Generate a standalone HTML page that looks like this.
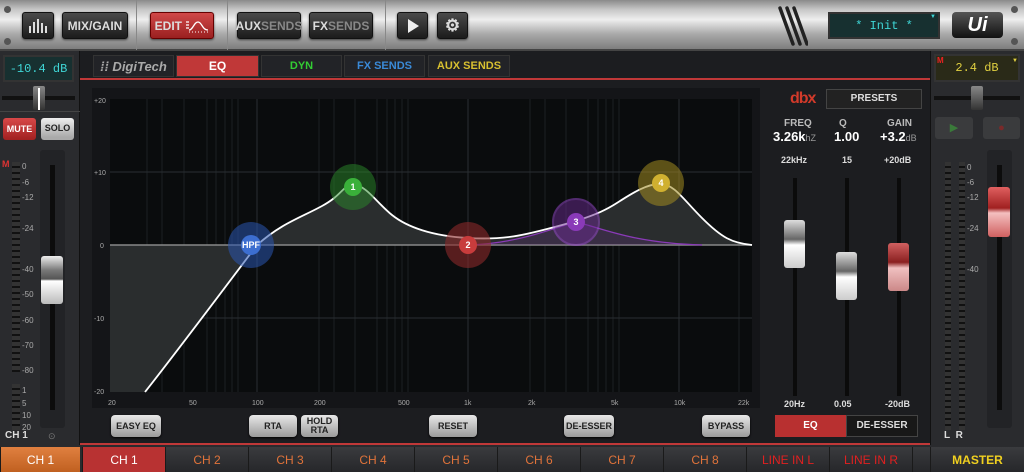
<!DOCTYPE html>
<html><head><meta charset="utf-8">
<style>
*{margin:0;padding:0;box-sizing:border-box}
body{width:1024px;height:472px;overflow:hidden;background:#1c1d20;font-family:"Liberation Sans",sans-serif;position:relative}
.a{position:absolute}
.top{left:0;top:0;width:1024px;height:51px;background:linear-gradient(#8a8a8a 0%,#c8c8c8 20%,#eeeeee 40%,#a8a8a8 70%,#7e7e7e 100%);border-bottom:2px solid #444}
.tb{position:absolute;top:12px;height:27px;background:linear-gradient(#4a4a4a,#1c1c1c);border:1px solid #111;border-radius:3px;color:#ddd;font-weight:bold;font-size:12px;display:flex;align-items:center;justify-content:center;box-shadow:0 1px 2px rgba(0,0,0,.6)}
.sep{position:absolute;top:0;width:1px;height:50px;background:#888}
.lcd{background:#173030;border:2px solid #333;color:#3fd6d6;font-family:"Liberation Mono",monospace;font-size:12px;display:flex;align-items:center;justify-content:center}
.tab{position:absolute;top:55px;height:22px;background:#222327;color:#ccc;font-weight:bold;font-size:11px;display:flex;align-items:center;justify-content:center;border:1px solid #333}
.btn{position:absolute;top:415px;height:22px;background:linear-gradient(#e8e8e8,#9a9a9a);border-radius:4px;color:#222;font-size:9px;font-weight:bold;display:flex;align-items:center;justify-content:center;text-align:center;line-height:9px;box-shadow:0 1px 2px #000}
.bt{position:absolute;top:447px;height:25px;width:83px;background:linear-gradient(#3a3b3e,#26272a);border-left:1px solid #1a1a1a;color:#e0733a;font-size:12px;display:flex;align-items:center;justify-content:center;font-family:"Liberation Sans Narrow","Liberation Sans",sans-serif}
.sm{font-size:8px;color:#aaa}
.cap{position:absolute;border-radius:3px}
</style></head><body>
<div class="a top"></div>
<div class="a" style="left:4px;top:6px;width:7px;height:7px;border-radius:50%;background:#555"></div>
<div class="a" style="left:4px;top:38px;width:7px;height:7px;border-radius:50%;background:#555"></div>
<div class="a" style="left:1011px;top:6px;width:7px;height:7px;border-radius:50%;background:#555"></div>
<div class="a" style="left:1011px;top:38px;width:7px;height:7px;border-radius:50%;background:#555"></div>
<div class="tb" style="left:22px;width:32px"><svg width="18" height="14"><g fill="#ddd"><rect x="0" y="7" width="2" height="7"/><rect x="4" y="3" width="2" height="11"/><rect x="8" y="0" width="2" height="14"/><rect x="12" y="4" width="2" height="10"/><rect x="16" y="7" width="2" height="7"/></g></svg></div>
<div class="tb" style="left:62px;width:66px">MIX/GAIN</div>
<div class="sep" style="left:136px"></div>
<div class="tb" style="left:150px;width:64px;background:linear-gradient(#d04848,#9a2020);border:1px solid #600">EDIT&nbsp;<svg width="24" height="14"><path d="M1 6h3M1 3h3M1 9h3M4 11C8 11 9 3 13 3S17 11 23 11" stroke="#fff" fill="none" stroke-width="1.3"/><path d="M4 13h19" stroke="#fff" stroke-dasharray="1 2"/></svg></div>
<div class="sep" style="left:227px"></div>
<div class="tb" style="left:237px;width:64px">AUX<span style="color:#888">SENDS</span></div>
<div class="tb" style="left:309px;width:64px">FX<span style="color:#888">SENDS</span></div>
<div class="sep" style="left:385px"></div>
<div class="tb" style="left:397px;width:31px"><svg width="12" height="14"><path d="M1 0L12 7L1 14Z" fill="#eee"/></svg></div>
<div class="tb" style="left:437px;width:31px;font-size:17px">⚙</div>
<svg class="a" style="left:778px;top:6px" width="30" height="40"><path d="M2 2L15 38M9 2L22 38M16 2L29 38" stroke="#222" stroke-width="3.5" stroke-linecap="round"/></svg>
<div class="a lcd" style="left:828px;top:12px;width:112px;height:27px">* Init *</div>
<div class="a" style="left:930px;top:14px;color:#3fd6d6;font-size:6px">▼</div>
<div class="a" style="left:952px;top:12px;width:51px;height:26px;background:linear-gradient(#555,#111);border-radius:4px;color:#fff;font-weight:bold;font-style:italic;font-size:20px;text-align:center;line-height:26px">Ui</div>

<!-- left strip -->
<div class="a" style="left:0;top:51px;width:80px;height:396px;background:#2a2b2e;border-right:1px solid #111"></div>
<div class="a lcd" style="left:3px;top:55px;width:71px;height:27px">-10.4 dB</div>
<div class="a" style="left:2px;top:96px;width:73px;height:4px;background:#111"></div>
<div class="a" style="left:33px;top:86px;width:12px;height:24px;background:linear-gradient(#888,#333);border-radius:2px"></div>
<div class="a" style="left:38px;top:88px;width:2px;height:22px;background:#fff"></div>
<div class="a" style="left:0;top:111px;width:80px;height:1px;background:#444"></div>
<div class="a" style="left:3px;top:118px;width:33px;height:22px;background:linear-gradient(#d84848,#a02020);border-radius:3px;color:#fff;font-size:9px;font-weight:bold;text-align:center;line-height:22px">MUTE</div>
<div class="a" style="left:41px;top:118px;width:33px;height:22px;background:linear-gradient(#eee,#aaa);border-radius:3px;color:#222;font-size:9px;font-weight:bold;text-align:center;line-height:20px;border-bottom:3px solid #aaa">SOLO</div>
<div class="a" style="left:2px;top:159px;color:#d33;font-size:9px;font-weight:bold">M</div>
<div class="a" style="left:12px;top:162px;width:8px;height:210px;background:repeating-linear-gradient(#333 0 4px,#111 4px 6px)"></div>
<div class="a" style="left:12px;top:384px;width:8px;height:46px;background:repeating-linear-gradient(#333 0 4px,#111 4px 6px)"></div>
<div class="a sm" style="left:22px;top:163px;line-height:1">0</div>
<div class="a sm" style="left:22px;top:178px">-6</div><div class="a sm" style="left:22px;top:193px">-12</div>
<div class="a sm" style="left:22px;top:224px">-24</div><div class="a sm" style="left:22px;top:265px">-40</div>
<div class="a sm" style="left:22px;top:290px">-50</div><div class="a sm" style="left:22px;top:316px">-60</div>
<div class="a sm" style="left:22px;top:341px">-70</div><div class="a sm" style="left:22px;top:366px">-80</div>
<div class="a sm" style="left:22px;top:386px">1</div><div class="a sm" style="left:22px;top:399px">5</div><div class="a sm" style="left:22px;top:411px">10</div><div class="a sm" style="left:22px;top:423px">20</div>
<div class="a" style="left:40px;top:150px;width:25px;height:278px;background:#222326;border-radius:3px"></div>
<div class="a" style="left:50px;top:165px;width:5px;height:245px;background:#0c0c0c"></div>
<div class="cap" style="left:41px;top:256px;width:22px;height:48px;background:linear-gradient(#eee 0%,#777 30%,#555 48%,#fff 52%,#bbb 100%)"></div>
<div class="a" style="left:5px;top:430px;color:#ddd;font-size:10px;font-weight:bold">CH 1</div>
<div class="a" style="left:48px;top:431px;color:#777;font-size:9px">⊙</div>

<!-- tabs -->
<div class="tab" style="left:93px;width:81px;color:#aaa;font-size:13px;font-style:italic">⁞⁞ DigiTech</div>
<div class="tab" style="left:176px;width:83px;background:#c03838;color:#fff;font-size:12px">EQ</div>
<div class="tab" style="left:261px;width:81px;color:#3c3">DYN</div>
<div class="tab" style="left:344px;width:81px;color:#3a8ad8">FX SENDS</div>
<div class="tab" style="left:428px;width:82px;color:#d8c030">AUX SENDS</div>
<div class="a" style="left:80px;top:78px;width:850px;height:2px;background:#c03838"></div>

<!-- graph -->
<div class="a" style="left:92px;top:88px;width:668px;height:320px;background:#141518"></div>
<svg class="a" style="left:92px;top:88px" width="668" height="320">
<rect x="18" y="11" width="642" height="293" fill="#0a0c0d"/>
<g stroke="#1c2023" stroke-width="1">
<path d="M55 11v293M70 11v293M92 11v293M115 11v293M124 11v293M133 11v293M140 11v293M146 11v293M227 11v293M242 11v293M263 11v293M285 11v293M295 11v293M303 11v293M310 11v293M316 11v293M438 11v293M453 11v293M474 11v293M496 11v293M506 11v293M514 11v293M521 11v293M527 11v293M647 11v293"/>
</g>
<g stroke="#2a2e32"><path d="M165 11v293M376 11v293M587 11v293M18 84h642M18 230h642"/></g>
<path d="M18 157H165C110 230 80 270 53 304H18Z" fill="#2a2d2e"/>
<path d="M165 157C190 135 208 130 230 118S250 97 262 97S285 115 300 127S340 148 376 150S430 148 470 137S520 118 528 113S555 95 569 96S590 110 610 130S640 155 660 157Z" fill="#2a2d2e"/>
<path d="M18 157H660" stroke="#888" stroke-width="1.5"/>
<path d="M376 157C430 155 460 140 484 134C510 140 540 155 610 157" stroke="#8a3ab8" fill="rgba(120,50,160,.2)" stroke-width="1.2"/>
<path d="M53 304C80 270 110 230 165 157" stroke="#fff" fill="none" stroke-width="1.8"/>
<path d="M165 157C190 135 208 130 230 118S250 97 262 97S285 115 300 127S340 148 376 150S430 148 470 137S520 118 528 113S555 95 569 96S590 110 610 130S640 155 660 157" stroke="#fff" fill="none" stroke-width="1.8"/>
<g font-size="7" fill="#aaa" font-family="Liberation Sans"><text x="2" y="15">+20</text><text x="2" y="87">+10</text><text x="8" y="160">0</text><text x="2" y="233">-10</text><text x="2" y="306">-20</text>
<text x="16" y="317">20</text><text x="97" y="317">50</text><text x="160" y="317">100</text><text x="222" y="317">200</text><text x="306" y="317">500</text><text x="372" y="317">1k</text><text x="436" y="317">2k</text><text x="519" y="317">5k</text><text x="582" y="317">10k</text><text x="646" y="317">22k</text></g>
<g font-size="9" font-weight="bold" fill="#fff" text-anchor="middle" font-family="Liberation Sans">
<circle cx="159" cy="157" r="23" fill="#2a56b0" opacity=".55"/><circle cx="159" cy="157" r="10" fill="#3c6ed0"/><text x="159" y="160">HPF</text>
<circle cx="261" cy="99" r="23" fill="#2a8a2a" opacity=".5"/><circle cx="261" cy="99" r="9" fill="#3ab03a"/><text x="261" y="102">1</text>
<circle cx="376" cy="157" r="23" fill="#8a2a2a" opacity=".6"/><circle cx="376" cy="157" r="9" fill="#c83c3c"/><text x="376" y="160">2</text>
<circle cx="484" cy="134" r="23" fill="#6a2a90" opacity=".5" stroke="#9a4ad0" stroke-width="2"/><circle cx="484" cy="134" r="9" fill="#8a3ab8"/><text x="484" y="137">3</text>
<circle cx="569" cy="95" r="23" fill="#a08a20" opacity=".55"/><circle cx="569" cy="95" r="9" fill="#d0b030"/><text x="569" y="98">4</text></g>
</svg>
<div class="btn" style="left:111px;width:50px">EASY EQ</div>
<div class="btn" style="left:249px;width:48px">RTA</div>
<div class="btn" style="left:301px;width:37px">HOLD<br>RTA</div>
<div class="btn" style="left:429px;width:48px">RESET</div>
<div class="btn" style="left:564px;width:50px">DE-ESSER</div>
<div class="btn" style="left:702px;width:48px">BYPASS</div>

<!-- right panel -->
<div class="a" style="left:790px;top:90px;color:#d23a2a;font-weight:bold;font-size:16px;letter-spacing:-1px">dbx</div>
<div class="a" style="left:826px;top:89px;width:96px;height:20px;background:#222;border:1px solid #444;color:#ddd;font-size:10px;font-weight:bold;text-align:center;line-height:18px">PRESETS</div>
<div class="a" style="left:770px;top:118px;width:150px;color:#bbb;font-size:10px;font-weight:bold">
<span class="a" style="left:14px">FREQ</span><span class="a" style="left:69px">Q</span><span class="a" style="left:117px">GAIN</span></div>
<div class="a" style="left:773px;top:129px;color:#fff;font-size:13px;font-weight:bold">3.26k<span style="color:#999;font-size:9px;font-weight:normal">hZ</span></div>
<div class="a" style="left:834px;top:129px;color:#fff;font-size:13px;font-weight:bold">1.00</div>
<div class="a" style="left:880px;top:129px;color:#fff;font-size:13px;font-weight:bold">+3.2<span style="color:#999;font-size:9px;font-weight:normal">dB</span></div>
<div class="a" style="left:781px;top:155px;color:#ddd;font-size:9px;font-weight:bold">22kHz</div>
<div class="a" style="left:842px;top:155px;color:#ddd;font-size:9px;font-weight:bold">15</div>
<div class="a" style="left:884px;top:155px;color:#ddd;font-size:9px;font-weight:bold">+20dB</div>
<div class="a" style="left:793px;top:178px;width:4px;height:218px;background:#0b0b0b"></div>
<div class="a" style="left:845px;top:178px;width:4px;height:218px;background:#0b0b0b"></div>
<div class="a" style="left:897px;top:178px;width:4px;height:218px;background:#0b0b0b"></div>
<div class="cap" style="left:784px;top:220px;width:21px;height:48px;background:linear-gradient(#ddd 0%,#666 40%,#fff 52%,#ccc 100%)"></div>
<div class="cap" style="left:836px;top:252px;width:21px;height:48px;background:linear-gradient(#ddd 0%,#666 40%,#fff 52%,#ccc 100%)"></div>
<div class="cap" style="left:888px;top:243px;width:21px;height:48px;background:linear-gradient(#d06060 0%,#8a2020 40%,#f0c0c0 52%,#c88 100%)"></div>
<div class="a" style="left:784px;top:399px;color:#ddd;font-size:9px;font-weight:bold">20Hz</div>
<div class="a" style="left:834px;top:399px;color:#ddd;font-size:9px;font-weight:bold">0.05</div>
<div class="a" style="left:885px;top:399px;color:#ddd;font-size:9px;font-weight:bold">-20dB</div>
<div class="a" style="left:775px;top:415px;width:71px;height:22px;background:#b83030;color:#fff;font-size:10px;font-weight:bold;text-align:center;line-height:22px">EQ</div>
<div class="a" style="left:846px;top:415px;width:72px;height:22px;background:#181818;border:1px solid #444;color:#ddd;font-size:10px;font-weight:bold;text-align:center;line-height:20px">DE-ESSER</div>
<div class="a" style="left:80px;top:443px;width:850px;height:2px;background:#c03838"></div>

<!-- right strip -->
<div class="a" style="left:930px;top:51px;width:94px;height:396px;background:#2a2b2e;border-left:1px solid #111"></div>
<div class="a" style="left:934px;top:54px;width:86px;height:28px;background:#2a2a18;border:2px solid #333;color:#e0d040;font-family:'Liberation Mono',monospace;font-size:12px;text-align:center;line-height:24px">2.4 dB</div>
<div class="a" style="left:937px;top:56px;color:#e22;font-size:8px;font-weight:bold">M</div>
<div class="a" style="left:1012px;top:58px;color:#e0d040;font-size:6px">▼</div>
<div class="a" style="left:934px;top:96px;width:86px;height:4px;background:#111"></div>
<div class="a" style="left:971px;top:86px;width:12px;height:24px;background:linear-gradient(#888,#333);border-radius:2px"></div>
<div class="a" style="left:935px;top:117px;width:38px;height:22px;background:#3a3b3d;border-radius:3px;color:#3a7a3a;text-align:center;line-height:22px;font-size:11px">▶</div>
<div class="a" style="left:983px;top:117px;width:37px;height:22px;background:#3a3b3d;border-radius:3px;color:#7a2a2a;text-align:center;line-height:22px;font-size:11px">●</div>
<div class="a" style="left:945px;top:162px;width:6px;height:268px;background:repeating-linear-gradient(#333 0 4px,#111 4px 6px)"></div>
<div class="a" style="left:959px;top:162px;width:6px;height:268px;background:repeating-linear-gradient(#333 0 4px,#111 4px 6px)"></div>
<div class="a sm" style="left:967px;top:163px">0</div><div class="a sm" style="left:967px;top:178px">-6</div><div class="a sm" style="left:967px;top:193px">-12</div><div class="a sm" style="left:967px;top:224px">-24</div><div class="a sm" style="left:967px;top:265px">-40</div>
<div class="a" style="left:987px;top:150px;width:25px;height:278px;background:#222326;border-radius:3px"></div>
<div class="a" style="left:997px;top:165px;width:5px;height:245px;background:#0c0c0c"></div>
<div class="cap" style="left:988px;top:187px;width:22px;height:50px;background:linear-gradient(#e06060 0%,#a02020 42%,#f4c0c0 52%,#d06060 100%)"></div>
<div class="a" style="left:944px;top:430px;color:#ddd;font-size:10px;font-weight:bold">L&nbsp;&nbsp;R</div>

<!-- bottom -->
<div class="a" style="left:0;top:445px;width:1024px;height:27px;background:#2a2b2e"></div>
<div class="bt" style="left:0;width:80px;background:linear-gradient(#e08040,#c06020);color:#fff">CH 1</div>
<div class="bt" style="left:82px;background:#b83232;color:#fff">CH 1</div>
<div class="bt" style="left:165px">CH 2</div><div class="bt" style="left:248px">CH 3</div><div class="bt" style="left:331px">CH 4</div><div class="bt" style="left:414px">CH 5</div><div class="bt" style="left:497px">CH 6</div><div class="bt" style="left:580px">CH 7</div><div class="bt" style="left:663px">CH 8</div>
<div class="bt" style="left:746px;color:#e02020">LINE IN L</div><div class="bt" style="left:829px;color:#e02020">LINE IN R</div>
<div class="bt" style="left:912px;width:18px"></div>
<div class="bt" style="left:930px;width:94px;color:#f0d020;font-weight:bold">MASTER</div>
</body></html>
